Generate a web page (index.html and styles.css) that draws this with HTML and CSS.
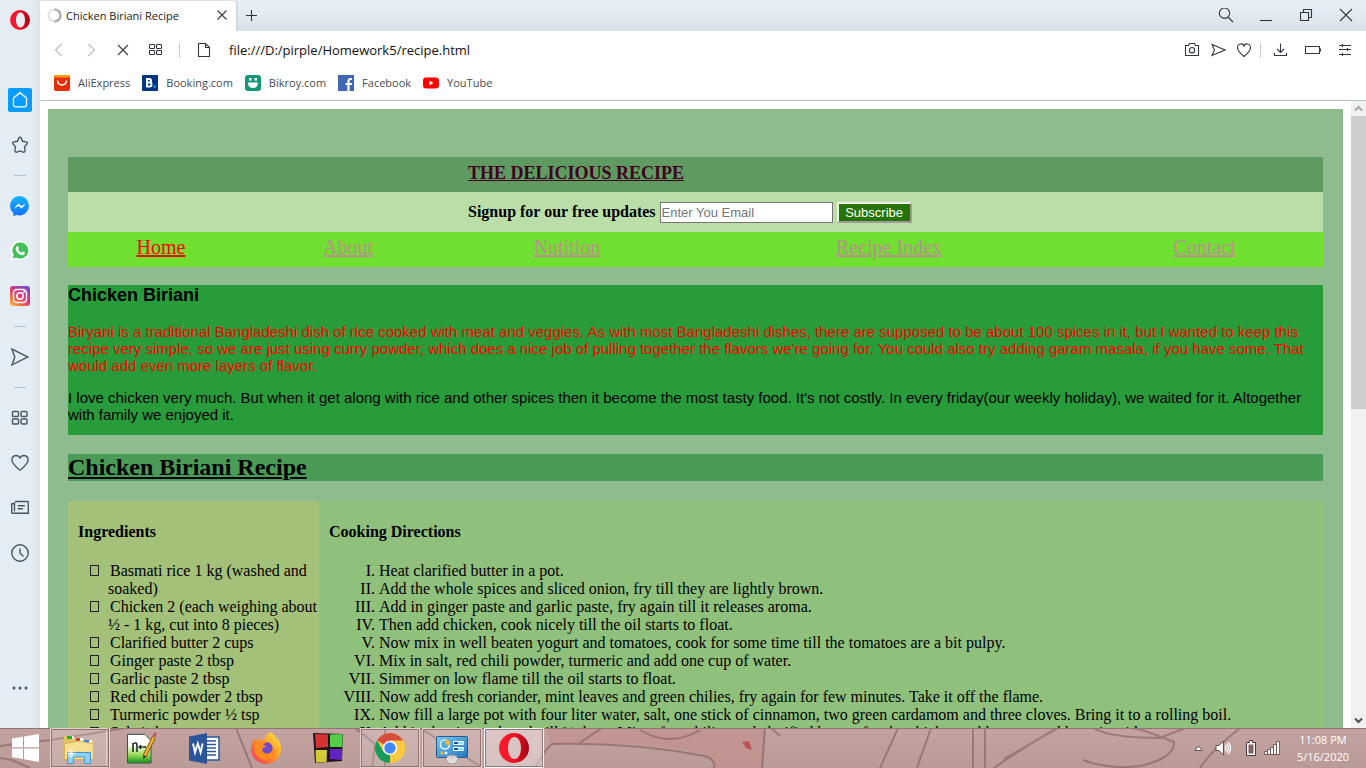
FILE: index.html
```html
<!DOCTYPE html>
<html lang="en">
<head>
<meta charset="utf-8">
<title>Chicken Biriani Recipe</title>
<link rel="stylesheet" href="styles.css">
</head>
<body>
<div class="browser">
  <nav class="sidebar" aria-label="Sidebar">
    <button class="logo" aria-label="Opera menu"><svg width="20" height="20" viewBox="0 0 20 20"><defs><linearGradient id="op" x1="0" x2="1"><stop offset="0" stop-color="#ff1b2d"/><stop offset=".5" stop-color="#f01428"/><stop offset="1" stop-color="#a70014"/></linearGradient></defs><path fill="url(#op)" fill-rule="evenodd" d="M10 0a10 10 0 1 0 0 20a10 10 0 0 0 0-20M10.500 2.600c2.700 0 4.500 3.300 4.500 7.400s-1.800 7.400-4.500 7.400S6 14.100 6 10s1.800-7.400 4.500-7.400"/></svg></button>
    <button class="side-item" aria-label="Speed dial"><svg width="24" height="24" viewBox="0 0 24 24"><rect width="24" height="24" rx="2" fill="#0a9bff"/><path fill="none" stroke="#fff" stroke-width="1.300" d="M5.500 10L12 4.700L18.500 10v7q0 1.800-1.800 1.800H7.300q-1.800 0-1.800-1.800z"/></svg></button>
    <button class="side-item" aria-label="Bookmarks"><svg width="18" height="18" viewBox="0 0 18 18"><path class="line" d="M9 1.200q.8 0 1.200.9l1.300 3.200l3.700.6q1.800.5.9 1.800l-2.500 3l.4 4q0 1.900-1.700 1.500L9 14.900l-3.300 1.300Q4 16.600 4 14.700l.4-4l-2.500-3Q1 6.400 2.800 5.900l3.700-.6l1.300-3.200Q8.200 1.200 9 1.200z"/></svg></button>
    <hr class="side-rule">
    <button class="side-item" aria-label="Messenger"><svg width="20" height="20" viewBox="0 0 20 20"><defs><linearGradient id="ms" x2="0" y2="1"><stop stop-color="#13b5ff"/><stop offset="1" stop-color="#1673ff"/></linearGradient></defs><path fill="url(#ms)" d="M10 0a9.700 9.700 0 1 1-3.500 19L3.300 20v-3A9.800 9.800 0 0 1 10 0z"/><path fill="#fff" d="M4 12.500l4.300-5l3.200 2.600L16 7.500l-4.300 5l-3.200-2.600z"/></svg></button>
    <button class="side-item" aria-label="WhatsApp"><svg width="20" height="20" viewBox="0 0 20 20"><path fill="#fff" d="M10.300 0a9.500 9.500 0 1 1-4.700 17.900L.8 19.200L2 14.500A9.500 9.500 0 0 1 10.300 0z"/><path fill="#43c157" d="M10.300 1.500a8 8 0 1 1-4 14.900l-3.500 1l1-3.400a8 8 0 0 1 6.500-12.500z"/><path fill="#fff" d="M7 5.200q.9-.5 1.300.4l.6 1.600q.1.500-.8 1.400q1.200 2.300 3.300 3.100l1-1.200l2.400 1.100q.4 2.500-2.500 2.700C9 14 5.700 10.300 5.600 7.700Q5.800 5.900 7 5.200"/></svg></button>
    <button class="side-item" aria-label="Instagram"><svg width="20" height="20" viewBox="0 0 20 20"><defs><linearGradient id="ig" x1="0" y1="1" x2=".8" y2="0"><stop stop-color="#ffc94a"/><stop offset=".3" stop-color="#f7683e"/><stop offset=".6" stop-color="#dc3486"/><stop offset="1" stop-color="#6a4fd0"/></linearGradient></defs><rect width="20" height="20" rx="3" fill="url(#ig)"/><g fill="none" stroke="#fff" stroke-width="1.500"><rect x="3.500" y="3.500" width="13" height="13" rx="3.500"/><circle cx="10" cy="10" r="3.200"/></g><circle cx="14" cy="6" r="1" fill="#fff"/></svg></button>
    <hr class="side-rule">
    <button class="side-item" aria-label="My Flow"><svg width="18" height="18" viewBox="0 0 18 18"><path class="line" d="M1 1.200L17 9L1 16.800L3.800 9z"/></svg></button>
    <hr class="side-rule">
    <button class="side-item" aria-label="Workspaces"><svg width="18" height="18" viewBox="0 0 18 18"><g class="line"><rect x="1.500" y="2.500" width="6" height="5" rx="1"/><rect x="10" y="2.500" width="6" height="5" rx="1"/><rect x="1.500" y="10" width="6" height="5" rx="1"/><rect x="10" y="10" width="6" height="5" rx="1"/></g></svg></button>
    <button class="side-item" aria-label="Favourites"><svg width="18" height="18" viewBox="0 0 18 18"><path class="line" d="M9 4Q7.800 1.500 5 1.500Q1 1.800.9 6Q1 9.500 8 15.500Q9 16.300 10 15.500Q17 9.500 17.100 6Q17 1.800 13 1.500Q10.200 1.500 9 4z"/></svg></button>
    <button class="side-item" aria-label="News"><svg width="18" height="18" viewBox="0 0 18 18"><path class="line" d="M4 2.500h12.500q.8 0 .8.800v11H1.800q-1.100 0-1.100-1.100V4.800h2.800V3.300M3.500 4.800v7.500M6.700 6.800h7.200M6.700 9.800H12"/></svg></button>
    <button class="side-item" aria-label="History"><svg width="18" height="18" viewBox="0 0 18 18"><path class="line" d="M9 .8a8.200 8.200 0 1 0 0 16.400A8.200 8.200 0 0 0 9 .8M9 4.500V9l3.500 3.500"/></svg></button>
    <button class="side-more" aria-label="More"><svg width="18" height="6" viewBox="0 0 18 6"><g fill="#4b5661"><circle cx="3" cy="3" r="1.500"/><circle cx="9" cy="3" r="1.500"/><circle cx="15" cy="3" r="1.500"/></g></svg></button>
  </nav>

  <div class="window">
    <header class="tabbar">
      <div class="tab">
        <svg width="15" height="15" viewBox="0 0 15 15" fill="none" stroke-width="2.200"><circle cx="7.500" cy="7.500" r="6" stroke="#e2e2e2"/><path stroke="#aaa" d="M7.500 1.500A6 6 0 0 1 7.500 13.500"/></svg>
        <span class="tab-title">Chicken Biriani Recipe</span>
        <button aria-label="Close tab"><svg width="12" height="12" viewBox="0 0 12 12"><path class="ink" d="M1.500 1.500l9 9M10.500 1.500l-9 9"/></svg></button>
      </div>
      <button class="new-tab" aria-label="New tab"><svg width="12" height="12" viewBox="0 0 12 12"><path class="ink" d="M5.500 0v11M0 5.500h11"/></svg></button>
      <div class="window-controls">
        <button aria-label="Search tabs"><svg width="16" height="16" viewBox="0 0 16 16"><path class="ink" d="M6.500 0a5 5 0 1 0 0 10.400A5 5 0 0 0 6.500 0M10 9l5 5"/></svg></button>
        <button aria-label="Minimize"><svg width="16" height="16" viewBox="0 0 16 16"><path class="ink" d="M2 12.500h12"/></svg></button>
        <button aria-label="Restore"><svg width="16" height="16" viewBox="0 0 16 16"><path class="ink" d="M2.500 4.500h8v8h-8zM5.500 4V1.500h8v8H11"/></svg></button>
        <button aria-label="Close"><svg width="16" height="16" viewBox="0 0 16 16"><path class="ink" d="M2 1l12 12M14 1L2 13"/></svg></button>
      </div>
    </header>

    <div class="toolbar">
      <button aria-label="Back"><svg width="16" height="16" viewBox="0 0 16 16"><path class="faint" d="M10.500 2L4.500 8l6 6"/></svg></button>
      <button aria-label="Forward"><svg width="16" height="16" viewBox="0 0 16 16"><path class="faint" d="M5.500 2l6 6l-6 6"/></svg></button>
      <button aria-label="Stop"><svg width="16" height="16" viewBox="0 0 16 16"><path class="ink" d="M3 3l10 10M13 3L3 13"/></svg></button>
      <button aria-label="Speed dial"><svg width="16" height="16" viewBox="0 0 16 16"><g class="ink"><rect x="2.500" y="2.500" width="5" height="4" rx=".8"/><rect x="9.500" y="2.500" width="5" height="4" rx=".8"/><rect x="2.500" y="8.500" width="5" height="4" rx=".8"/><rect x="9.500" y="8.500" width="5" height="4" rx=".8"/></g></svg></button>
      <span class="divider"></span>
      <svg width="16" height="16" viewBox="0 0 16 16"><path class="ink" d="M2.500 1.500h7l4 4v9h-11zM9.500 1.500v4h4"/></svg>
      <input class="address" aria-label="Address" value="file:///D:/pirple/Homework5/recipe.html">
      <div class="page-tools">
        <button aria-label="Snapshot"><svg width="16" height="16" viewBox="0 0 16 16"><path class="ink" d="M1.500 3.500h3l1-2h5l1 2h3v10h-13zM8 5.500a2.700 2.700 0 1 0 0 5.400a2.700 2.700 0 0 0 0-5.400"/></svg></button>
        <button aria-label="Send"><svg width="16" height="16" viewBox="0 0 16 16"><path class="ink" d="M2 2.500L15 8L2 13.500L4.500 8z"/></svg></button>
        <button aria-label="Add to bookmarks"><svg width="16" height="16" viewBox="0 0 16 16"><path class="ink" d="M8 4C7 1 1.500 1 1.500 6Q1.500 9 8 14.500Q14.500 9 14.500 6C14.500 1 9 1 8 4z"/></svg></button>
      </div>
      <span class="divider short"></span>
      <div class="app-tools">
        <button aria-label="Downloads"><svg width="16" height="16" viewBox="0 0 16 16"><path class="ink" d="M1.500 11v2.500h12V11M7.500 1.500V10M4 7l3.500 3.500L11 7"/></svg></button>
        <button aria-label="Battery saver"><svg width="16" height="16" viewBox="0 0 16 16"><path class="ink" d="M.5 4.500h14v7H.5zM15.500 6.500v3"/></svg></button>
        <button aria-label="Easy setup"><svg width="16" height="16" viewBox="0 0 16 16"><path class="ink" d="M2 3.500h12M2 7.500h12M2 12.500h12M5.500 2v3M10.500 6v3M5.500 11v3"/></svg></button>
      </div>
    </div>

    <nav class="bookmarks" aria-label="Bookmarks bar">
      <a href="#"><svg width="16" height="16" viewBox="0 0 16 16"><rect width="16" height="16" rx="2" fill="#e62e04"/><path fill="#ff9d00" d="M2 0h12q2 0 2 2.500H0Q0 0 2 0"/><path fill="none" stroke="#fff" stroke-width="1.500" d="M3.500 5.500q.5 4.500 4.500 4.500t4.500-4.500"/></svg><span>AliExpress</span></a>
      <a href="#"><svg width="16" height="16" viewBox="0 0 16 16"><rect width="16" height="16" rx="1" fill="#003580"/><path fill="none" stroke="#fff" stroke-width="2" d="M5 4h2.200q1.800 0 1.800 1.700T7.200 7.500H5zM5 7.500h2.700q1.800 0 1.800 2t-1.800 2H5z"/><circle cx="12.500" cy="11.500" r="1.200" fill="#1ea4ff"/></svg><span>Booking.com</span></a>
      <a href="#"><svg width="16" height="16" viewBox="0 0 16 16"><rect width="16" height="16" rx="3" fill="#149777"/><path fill="#fff" d="M3 7.500h10v1q-.7 4.500-5 4.500T3 8.500zM4 3h2.500v2.500H4zM9.500 3H12v2.500H9.500z"/></svg><span>Bikroy.com</span></a>
      <a href="#"><svg width="16" height="16" viewBox="0 0 16 16"><rect width="16" height="16" fill="#4267b2"/><path fill="none" stroke="#fff" stroke-width="2.200" d="M10.500 16V6.500q0-2.500 2.500-2.500h1M7.500 9H14"/></svg><span>Facebook</span></a>
      <a href="#"><svg width="16" height="16" viewBox="0 0 16 16"><rect y="2.500" width="16" height="11" rx="3" fill="#f00"/><path fill="#fff" d="M6.500 5.500v5l4-2.500z"/></svg><span>YouTube</span></a>
    </nav>

    <div class="viewport">
      <main class="page">
        <div class="site">
          <div class="site-header"><a href="#">THE DELICIOUS RECIPE</a></div>
          <form class="signup">
            <label for="email">Signup for our free updates</label>
            <input id="email" type="email" placeholder="Enter You Email">
            <button type="button">Subscribe</button>
          </form>
          <nav class="menu" aria-label="Main">
            <a class="current" href="#">Home</a>
            <a href="#">About</a>
            <a href="#">Nutition</a>
            <a href="#">Recipe Index</a>
            <a href="#">Contact</a>
          </nav>
          <section class="intro">
            <h3>Chicken Biriani</h3>
            <p class="lead">Biryani is a traditional Bangladeshi dish of rice cooked with meat and veggies. As with most Bangladeshi dishes, there are supposed to be about 100 spices in it, but I wanted to keep this recipe very simple, so we are just using curry powder, which does a nice job of pulling together the flavors we're going for. You could also try adding garam masala, if you have some. That would add even more layers of flavor.</p>
            <p>I love chicken very much. But when it get along with rice and other spices then it become the most tasty food. It's not costly. In every friday(our weekly holiday), we waited for it. Altogether with family we enjoyed it.</p>
          </section>
          <h2>Chicken Biriani Recipe</h2>
          <div class="recipe">
            <section class="ingredients">
              <h4>Ingredients</h4>
              <ul>
                <li>Basmati rice 1 kg (washed and soaked)</li>
                <li>Chicken 2 (each weighing about ½ - 1 kg, cut into 8 pieces)</li>
                <li>Clarified butter 2 cups</li>
                <li>Ginger paste 2 tbsp</li>
                <li>Garlic paste 2 tbsp</li>
                <li>Red chili powder 2 tbsp</li>
                <li>Turmeric powder ½ tsp</li>
                <li>Salt 1 tbsp</li>
              </ul>
            </section>
            <section class="directions">
              <h4>Cooking Directions</h4>
              <ol>
                <li>Heat clarified butter in a pot.</li>
                <li>Add the whole spices and sliced onion, fry till they are lightly brown.</li>
                <li>Add in ginger paste and garlic paste, fry again till it releases aroma.</li>
                <li>Then add chicken, cook nicely till the oil starts to float.</li>
                <li>Now mix in well beaten yogurt and tomatoes, cook for some time till the tomatoes are a bit pulpy.</li>
                <li>Mix in salt, red chili powder, turmeric and add one cup of water.</li>
                <li>Simmer on low flame till the oil starts to float.</li>
                <li>Now add fresh coriander, mint leaves and green chilies, fry again for few minutes. Take it off the flame.</li>
                <li>Now fill a large pot with four liter water, salt, one stick of cinnamon, two green cardamom and three cloves. Bring it to a rolling boil.</li>
                <li>Add in the rice and cook till ¾ done. Mix a few chilies and clarified butter, fry the chicken, add on top and keep it aside.</li>
              </ol>
            </section>
          </div>
        </div>
      </main>
      <div class="scrollbar">
        <svg width="15" height="15" viewBox="0 0 15 15"><path fill="none" stroke="#a8a8a8" stroke-width="2" d="M4 9.500L7.500 6L11 9.500"/></svg>
        <div class="track"><div class="thumb"></div></div>
        <svg width="15" height="15" viewBox="0 0 15 15"><path fill="none" stroke="#505050" stroke-width="2" d="M4 5.500L7.500 9L11 5.500"/></svg>
      </div>
    </div>
  </div>
</div>

<footer class="taskbar">
  <svg class="wallpaper" viewBox="0 0 1366 40" preserveAspectRatio="none" aria-hidden="true">
    <defs><linearGradient id="tb" x2="0" y2="1"><stop stop-color="#c4a2a0"/><stop offset="1" stop-color="#b99b97"/></linearGradient></defs>
    <rect width="1366" height="40" fill="url(#tb)"/>
    <path fill="#c38f8c" opacity=".65" d="M545 0H765l-3 40H715q-2-12-15-16q-80-12-148-8z"/>
    <g fill="none" stroke="#765252" stroke-width="2" opacity=".5">
      <path d="M0 18L50 12Q90 6 125 0M0 30l12 2l18 8M236 0l16 40M355 0l20 16l-3 24M385 0v40M420 0l60 38M535 40Q546 20 552 16Q630 14 705 28Q716 32 714 40M578 16L602 0M640 2Q670 20 700 2M765 0l-3 40M771 0l9 8M898 0L880 40M931 0l-14 40M973 0v40M985 0v40M1057 0Q1010 28 994 40M1004 31L1058 0M1083 32Q1110 42 1140 38Q1175 30 1174 14Q1140 0 1130 0M1093 0Q1110 10 1160 10L1185 0M1240 0Q1210 24 1200 40"/>
    </g>
    <path fill="#b85554" d="M742 14l7-1l3 9l-6-2z"/>
    <path stroke="#8f7674" d="M0 .5h1366"/>
  </svg>
  <button class="start" aria-label="Start"><svg width="28" height="28" viewBox="0 0 28 28"><path fill="#fff" d="M1 4.500L12 2.800v10.500H1zM13 2.600L28 0v13.300H13zM1 14.500h11V25L1 23.300zM13 14.500h15V28l-15-2.700z"/></svg></button>
  <div class="tasks">
    <button class="task open stacked" aria-label="File Explorer"><svg width="32" height="32" viewBox="0 0 32 32"><path fill="#e3c468" d="M1 4h8l2 2h6l2 2h12v20H1z"/><path fill="#18b61f" d="M4 4h5v3H4z"/><path fill="#d9402b" d="M13 6h5v3h-5z"/><path fill="#2d7fe0" d="M21 8h6v3h-6z"/><path fill="#fff" d="M9 4h2v3H9zM17 6h3v3h-3zM26 8h3v3h-3z"/><path fill="#f6df93" stroke="#d6b55a" d="M1.500 11.500L17 9l13.500 3v15.500h-29z"/><path fill="#8fd0ee" stroke="#4699c7" d="M4.500 20.500h23v11h-6V25h-11v6.500h-6z"/><path stroke="#fff" d="M8 17v9M4 21.500h9M5 18.500l6 6M11 18.500l-6 6"/></svg></button>
    <button class="task" aria-label="Notepad++"><svg width="32" height="32" viewBox="0 0 32 32"><defs><linearGradient id="np" x2="0" y2="1"><stop offset=".35" stop-color="#fff"/><stop offset=".7" stop-color="#9bdc5a"/><stop offset="1" stop-color="#14931b"/></linearGradient></defs><path fill="url(#np)" stroke="#405540" d="M1.500 2.500H19l6 6v22.500h-23.500z"/><path stroke="#777" stroke-dasharray="1 1" stroke-width="2" d="M2 2h18"/><path fill="none" stroke="#182018" stroke-width="1.500" d="M7 20v-9M7 12q4-3 4 2v6M12.500 15h4M14.500 13v4M17 15h3"/><path stroke="#775114" stroke-width="4" d="M18.500 24L28 5"/><path stroke="#f3b12c" stroke-width="2.500" d="M18.500 24L28 5"/><path fill="#b75e69" d="M26 4l3-4l2 2l-2 4z"/><path fill="#332c22" d="M17 27l.5-4l3 1.500z"/></svg></button>
    <button class="task" aria-label="Word"><svg width="32" height="32" viewBox="0 0 32 32"><path fill="#fff" stroke="#2b579a" stroke-width="1.500" d="M15 5h16v23H15z"/><path stroke="#2b579a" stroke-width="1.500" d="M18 9h10M18 12.500h10M18 16h10M18 19.500h10M18 23h10"/><path fill="#2b579a" d="M1 4.500L19 1v31L1 28.500z"/><path fill="none" stroke="#fff" stroke-width="1.900" d="M5 11.500l2 9l2.800-9l2.800 9l2-9"/></svg></button>
    <button class="task" aria-label="Firefox"><svg width="32" height="32" viewBox="0 0 32 32"><defs><linearGradient id="ff" x1="1" x2="0" y2="1"><stop stop-color="#fff03e"/><stop offset=".5" stop-color="#ff9127"/><stop offset="1" stop-color="#f52b67"/></linearGradient></defs><path fill="url(#ff)" d="M20 0q6 3 6 8q1-1 1-3q4 6 4 12a15 15 0 0 1-30 0q0-6 4-11l1 3l3-3q0 3 3 3q3-1 3-4q3-4 5-5"/><circle cx="16" cy="17" r="7" fill="#7048c9"/><path fill="#ff8a20" d="M5 10q7-3 12 1q-3 0-4 2q3 0 3 2q-3 0-4 3q2 5 8 3q4-3 2-7q6 5 1 11q-8 6-15 0q-5-6-3-15"/></svg></button>
    <button class="task" aria-label="Windows classic"><svg width="32" height="32" viewBox="0 0 32 32"><path fill="#211519" d="M1 1l30 1l-1 27L3 31z"/><path fill="#d73232" d="M3 2l13 .5v12.500L4 16z"/><path fill="#50cf47" d="M18 2.500L30.500 2v13H18z"/><path fill="#d2cb38" d="M3.500 18H15l-.5 12L4 30.500z"/><path fill="#6124c1" d="M18 17h12v11l-12-1z"/></svg></button>
    <button class="task open" aria-label="Chrome"><svg width="32" height="32" viewBox="0 0 32 32"><circle cx="16" cy="16" r="15" fill="#fbc83e"/><path fill="#d94b3d" d="M16 16L3 8.500A15 15 0 0 1 29 8.500H16z"/><path fill="#179b59" d="M3 8.500l6.500 11.300L16 23.500v7.500A15 15 0 0 1 3 8.500"/><path fill="#fbc83e" d="M16 9h13.300A15 15 0 0 1 16 31l6.500-11z"/><circle cx="16" cy="16" r="7.200" fill="#fff"/><circle cx="16" cy="16" r="5.700" fill="#4285f4"/></svg></button>
    <button class="task open" aria-label="Control Panel"><svg width="32" height="32" viewBox="0 0 32 32"><defs><linearGradient id="cp" x2="1" y2="1"><stop stop-color="#78caee"/><stop offset="1" stop-color="#2774c1"/></linearGradient></defs><rect x=".5" y="4.500" width="31" height="21" rx="1" fill="url(#cp)" stroke="#285a8c"/><circle cx="9" cy="12.500" r="4.500" fill="#4ca9dc" stroke="#e1f5fc" stroke-width="1.500"/><path fill="#ffb229" d="M9 12.500V7a5.500 5.500 0 0 1 5 6z"/><path fill="#174f9a" stroke="#fff" d="M17.500 9.500h10v3h-10zM17.500 15.500h10v3h-10z"/><path fill="#8ee6ff" d="M22 10h5v2h-5zM22 16h5v2h-5z"/><circle cx="6" cy="21" r="1.500" fill="#ffb229"/><circle cx="10" cy="21" r="1.500" fill="#e9f9ff"/><ellipse cx="16" cy="27.500" rx="6" ry="4.500" fill="#ddd" stroke="#999"/><path stroke="#aaa" d="M16 23v4"/></svg></button>
    <button class="task open active" aria-label="Opera"><svg width="32" height="32" viewBox="0 0 32 32"><path fill="url(#op)" fill-rule="evenodd" d="M16 1a15 15 0 1 0 0 30a15 15 0 0 0 0-30M16.500 5c4 0 6.500 5 6.500 11s-2.500 11-6.500 11S10 22 10 16s2.500-11 6.500-11"/></svg></button>
  </div>
  <div class="tray">
    <button aria-label="Show hidden icons"><svg width="9" height="6" viewBox="0 0 9 6"><path fill="#fff" stroke="#655" d="M.8 5.500L4.500 1l3.700 4.500z"/></svg></button>
    <button aria-label="Volume"><svg width="16" height="16" viewBox="0 0 16 16"><path fill="#fff" stroke="#5d4948" d="M1 5.500h3L8.500 1v14L4 10.500H1z"/><path fill="none" stroke="#fff" stroke-width="1.300" d="M10 5.500q2 2.500 0 5M11.500 3.500q4 4.500 0 9M13.500 2q4 6 0 12"/></svg></button>
    <button class="power" aria-label="Battery"><svg width="10" height="16" viewBox="0 0 10 16"><path fill="#fff" stroke="#49393a" d="M3.500.5h3v2h3v13h-9v-13h3z"/><path fill="#7c6161" d="M2.500 4.500h5v9h-5z"/></svg></button>
    <button aria-label="Network"><svg width="16" height="14" viewBox="0 0 16 14"><path fill="#fff" stroke="#5d4948" stroke-width=".8" d="M.5 10.500h3v3h-3zM3.500 8.500h3v5h-3zM6.500 6.500h3v7h-3zM9.500 3.500h3v10h-3zM12.500.5h3v13h-3z"/></svg></button>
    <time class="clock" datetime="2020-05-16T23:08">11:08 PM<br>5/16/2020</time>
  </div>
</footer>
</body>
</html>
```
FILE: styles.css
```css
* {
  box-sizing: border-box;
}

body {
  display: flex;
  flex-direction: column;
  height: 100vh;
  margin: 0;
  overflow: hidden;
  font-family: "Liberation Serif", "Times New Roman", serif;
  font-size: 16px;
}

button {
  margin: 0;
  padding: 0;
  border: 0;
  background: none;
  font: inherit;
}

svg {
  display: block;
  flex: none;
}

.line,
.ink,
.faint {
  fill: none;
  stroke: #4b5661;
  stroke-width: 1.4;
}

.ink {
  stroke: #33383d;
  stroke-width: 1.1;
}

.faint {
  stroke: #bdbdbd;
  stroke-width: 1.2;
}

.browser {
  display: flex;
  flex: 1;
  min-height: 0;
}

/* Sidebar */

.sidebar {
  display: flex;
  flex-direction: column;
  flex: none;
  width: 40px;
  background: linear-gradient(to right, #e4ecf4 80%, #dbe4ec);
}

.sidebar button {
  display: grid;
  place-items: center;
}

.logo {
  height: 40px;
  margin-bottom: 37px;
}

.side-item {
  height: 45px;
}

.side-rule {
  width: 12px;
  height: 1px;
  margin: 8px auto 7px;
  border: 0;
  background: #b4c2ce;
}

.sidebar .side-more {
  height: 24px;
  margin-top: auto;
  margin-bottom: 28px;
}

/* Browser chrome */

.window {
  display: flex;
  flex-direction: column;
  flex: 1;
  min-width: 0;
  font-family: "Open Sans", "Noto Sans", sans-serif;
}

.tabbar {
  display: flex;
  align-items: center;
  height: 31px;
  background: linear-gradient(#e5edf5 30%, #d8e0e8);
}

.tab {
  display: flex;
  align-items: center;
  gap: 4px;
  align-self: flex-end;
  width: 196px;
  height: 30px;
  padding: 0 8px 2px 7px;
  border-radius: 0 3px 0 0;
  background: #fff;
  box-shadow: 1px 0 2px #c2c9d0;
}

.tab-title {
  flex: 1;
  font-size: 11px;
  color: #222;
  white-space: nowrap;
}

.new-tab {
  margin-left: 10px;
}

.window-controls {
  display: flex;
  gap: 24px;
  margin-left: auto;
  padding-right: 12px;
}

.toolbar {
  display: flex;
  align-items: center;
  gap: 16px;
  height: 38px;
  padding: 0 13px 0 11px;
  background: #fff;
}

.divider {
  width: 1px;
  height: 15px;
  background: #c9c9c9;
}

.divider.short {
  margin: 0 -4px 0 -8px;
}

.address {
  flex: 1;
  min-width: 0;
  padding: 0 1px;
  border: 0;
  background: none;
  font: 13px "Open Sans", "Noto Sans", sans-serif;
  color: #111;
}

.page-tools {
  display: flex;
  gap: 10px;
}

.app-tools {
  display: flex;
  gap: 16px;
}

.bookmarks {
  display: flex;
  align-items: center;
  gap: 12px;
  height: 32px;
  padding: 0 14px 4px;
  border-bottom: 1px solid #b1c0cd;
  background: #fff;
}

.bookmarks a {
  display: flex;
  align-items: center;
  gap: 8px;
  font-size: 11px;
  color: #444b55;
  text-decoration: none;
}

/* Page area */

.viewport {
  display: flex;
  flex: 1;
  min-height: 0;
  background: #fff;
  font-family: "Liberation Serif", "Times New Roman", serif;
}

.page {
  flex: 1;
  min-width: 0;
  padding: 8px;
  overflow: hidden;
}

.site {
  padding: 48px 20px 20px;
  background: #8fbc8f;
}

.site-header {
  height: 35px;
  padding: 5px 0 0 400px;
  background: #5f9b60;
  font-size: 18px;
  font-weight: bold;
  line-height: 22px;
}

.site-header a {
  color: #400020;
}

.signup {
  display: flex;
  align-items: center;
  gap: 4px;
  height: 40px;
  padding-left: 400px;
  background: #bbdea8;
}

.signup label {
  font-weight: bold;
}

.signup input {
  width: 173px;
  height: 21px;
  padding: 1px;
  border: 1px solid #767676;
  background: #fff;
  font: 13px "Liberation Sans", Arial, sans-serif;
}

.signup input::placeholder {
  color: #757575;
}

.signup button {
  width: 75px;
  height: 21px;
  border: 2px solid;
  border-color: #eee #a09a9a #a09a9a #eee;
  background: #267306;
  font: 13px "Liberation Sans", Arial, sans-serif;
  color: #fff;
}

.menu {
  display: grid;
  grid-template-columns: 186fr 188fr 250fr 394fr 237fr;
  height: 35px;
  padding-top: 4px;
  background: #70e030;
  font-size: 20px;
  line-height: 22px;
  text-align: center;
}

.menu a {
  color: #bc8f8f;
}

.menu .current {
  color: #f00;
}

.intro {
  margin-top: 18px;
  padding-bottom: 12px;
  background: #289c3a;
  font: 15px/17px "Liberation Sans", Arial, sans-serif;
}

.intro h3 {
  margin: 0;
  font-size: 18px;
  line-height: 20px;
}

.intro p {
  margin: 15px 0 0;
}

.intro .lead {
  margin-top: 18px;
  color: #f00;
}

h2 {
  margin: 19px 0 20px;
  background: #4a9b55;
  font-size: 24px;
  line-height: 27px;
  text-decoration: underline;
}

.recipe {
  display: grid;
  grid-template-columns: 1fr 4fr;
  line-height: 18px;
}

.recipe section {
  padding: 22px 0 20px 10px;
}

.ingredients {
  background: #a3c178;
}

.directions {
  background: #90c17c;
}

.recipe h4 {
  margin: 0 0 21px;
}

.recipe ul,
.recipe ol {
  margin: 0;
}

.recipe ul {
  padding-left: 30px;
  list-style: none;
}

.recipe ol {
  padding-left: 50px;
  list-style: upper-roman;
}

.ingredients li {
  text-indent: -18px;
}

.ingredients li::before {
  display: inline-block;
  box-sizing: border-box;
  width: 9px;
  height: 11px;
  margin-right: 11px;
  border: 1px solid #222;
  content: "";
}

.scrollbar {
  display: flex;
  flex-direction: column;
  width: 15px;
  background: #f1f1f1;
}

.track {
  flex: 1;
}

.thumb {
  height: 49%;
  background: #cdcdcd;
}

/* Taskbar */

.taskbar {
  position: relative;
  display: flex;
  flex: none;
  height: 40px;
  font-family: "Open Sans", "Noto Sans", sans-serif;
}

.wallpaper {
  position: absolute;
  inset: 0;
  z-index: -1;
  width: 100%;
  height: 100%;
}

.start {
  width: 50px;
  padding-left: 11px;
}

.tasks {
  display: flex;
  gap: 2px;
}

.task {
  display: grid;
  place-items: center;
  width: 60px;
  height: 40px;
}

.task.open {
  border: 1px solid #e3d1d0;
  outline: 1px solid #927573;
  outline-offset: -2px;
  background: #ffffff30;
}

.task.stacked {
  border-right-width: 4px;
  border-right-style: double;
}

.task.active {
  border: 2px solid #fff;
  background: #ffffff66;
}

.tray {
  display: flex;
  align-items: center;
  margin-left: auto;
  padding-right: 15px;
  gap: 12px;
}

.tray .power {
  margin: 0 -4px 0 3px;
}

.clock {
  width: 56px;
  margin-left: 3px;
  font-size: 11px;
  line-height: 17px;
  color: #fff;
  text-align: center;
  white-space: nowrap;
}
```
